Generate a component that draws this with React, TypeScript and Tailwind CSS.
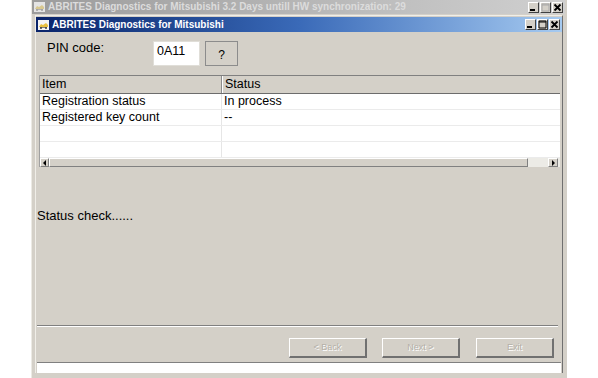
import React from "react";

const AppIcon = ({ dim }: { dim?: boolean }) => (
  <svg width="11" height="10" viewBox="0 0 11 10" className="shrink-0">
    <rect x="0" y="0" width="11" height="10" fill={dim ? "#e4e4e4" : "#f4f4f4"} />
    <path d="M1 7 L3 4 L5 5 L8 3 L10 5 L10 7 Z" fill={dim ? "#d8c890" : "#e8c040"} />
    <rect x="2" y="7" width="7" height="1" fill={dim ? "#b0b0b0" : "#808080"} />
    <circle cx="3" cy="8" r="1" fill={dim ? "#a0a0a0" : "#404040"} />
    <circle cx="8" cy="8" r="1" fill={dim ? "#a0a0a0" : "#404040"} />
  </svg>
);

const TitleBtn = ({ kind, dim }: { kind: "min" | "max" | "close"; dim?: boolean }) => (
  <div className="w-[11px] h-[11px] bg-[#d4d0c8] border-t border-l border-t-white border-l-white border-r border-b border-r-[#404040] border-b-[#404040] flex items-center justify-center">
    <svg width="9" height="9" viewBox="0 0 9 9">
      {kind === "min" && <rect x="1" y="6" width="5" height="2" fill={dim ? "#a0a0a0" : "#000"} />}
      {kind === "max" && (
        <path d="M1 1 H8 V8 H1 Z M1 2 H8" stroke={dim ? "#a8a8a8" : "#000"} strokeWidth="1" fill="none" />
      )}
      {kind === "close" && (
        <path d="M1.5 1.5 L7.5 7.5 M7.5 1.5 L1.5 7.5" stroke={dim ? "#a0a0a0" : "#000"} strokeWidth="1.8" />
      )}
    </svg>
  </div>
);

const WizBtn = ({ label }: { label: string }) => (
  <div className="w-[78px] h-[20px] bg-[#d4d0c8] border-t border-l border-t-white border-l-white border-r-2 border-b-2 border-r-[#707070] border-b-[#707070] flex items-center justify-center text-[9px] text-[#b4b0a8] [text-shadow:1px_1px_0_#ffffff]">
    {label}
  </div>
);

export default function App() {
  return (
    <div className="w-[598px] h-[378px] bg-white flex font-['Liberation_Sans',Arial,sans-serif] overflow-hidden">
      {/* outer window */}
      <div className="ml-[31px] w-[536px] h-[378px] bg-[#d4d0c8] border-l border-l-[#eceae4] flex flex-col">
        {/* outer title bar */}
        <div className="h-[14px] mr-[2px] bg-gradient-to-r from-[#9c9c9c] to-[#d0d0d0] flex items-center pl-[2px] pr-[2px] gap-[3px]">
          <AppIcon dim />
          <span className="text-[10px] font-bold text-[#dcdcdc] whitespace-nowrap leading-none">
            ABRITES Diagnostics for Mitsubishi 3.2 Days untill HW synchronization: 29
          </span>
          <div className="flex-1" />
          <div className="flex gap-[1px] mt-[1px]">
            <TitleBtn kind="min" />
            <TitleBtn kind="max" dim />
            <TitleBtn kind="close" />
          </div>
        </div>
        {/* inner window */}
        <div className="mt-[1px] ml-[3px] w-[528px] flex-1 flex flex-col border-t border-l border-t-[#f0eee8] border-l-[#f0eee8] border-r border-r-[#707070]">
          <div className="h-[15px] mt-[1px] bg-gradient-to-r from-[#0a246a] via-[#3a6ab8] to-[#a6caf0] flex items-center pl-[2px] pr-[2px] gap-[3px]">
            <AppIcon />
            <span className="text-[10px] font-bold text-white whitespace-nowrap leading-none">
              ABRITES Diagnostics for Mitsubishi
            </span>
            <div className="flex-1" />
            <div className="flex gap-[1px]">
              <TitleBtn kind="min" />
              <TitleBtn kind="max" />
              <TitleBtn kind="close" />
            </div>
          </div>
          {/* content */}
          <div className="h-[330px] flex flex-col">
            <div className="mt-[9px] h-[25px] flex items-start">
              <span className="ml-[11px] mt-[-1px] text-[13px] text-black leading-[16px] w-[106px]">PIN code:</span>
              <div className="w-[47px] h-[25px] bg-white border border-[#e0ded8] pl-[3px] pt-[1px] text-[12.5px] leading-[16px] text-black">
                0A11
              </div>
              <div className="ml-[5px] w-[33px] h-[25px] border border-[#8c8c8c] flex items-end justify-center pb-[3px] text-[12px] leading-[14px] text-black">
                ?
              </div>
            </div>
            {/* table */}
            <div className="mt-[9px] ml-[3px] mr-[2px] flex flex-col text-[12.5px] text-black border-l border-l-[#a0a0a0]">
              <div className="h-[19px] bg-[#d4d0c8] border-t border-b border-t-[#808080] border-b-[#6c6c6c] flex">
                <div className="w-[182px] pl-[2px] leading-[17px] border-r border-r-[#8c8c8c]">Item</div>
                <div className="flex-1 pl-[2px] leading-[17px] border-l border-l-white">Status</div>
              </div>
              {[
                ["Registration status", "In process"],
                ["Registered key count", "--"],
                ["", ""],
                ["", ""],
              ].map((r, i) => (
                <div key={i} className="h-[16px] bg-white flex border-b border-b-[#ebebeb]">
                  <div className="w-[182px] pl-[2px] leading-[15px] border-r border-r-[#e6e6e6] whitespace-nowrap">{r[0]}</div>
                  <div className="flex-1 pl-[2px] leading-[15px] whitespace-nowrap">{r[1]}</div>
                </div>
              ))}
              {/* scrollbar */}
              <div className="h-[9px] flex bg-[#ecebe6]">
                <div className="w-[9px] h-[9px] bg-[#d4d0c8] border-t border-l border-white border-r border-b border-r-[#808080] border-b-[#808080] flex items-center justify-center">
                  <div className="w-0 h-0 border-y-[3px] border-y-transparent border-r-[3px] border-r-black" />
                </div>
                <div className="w-[479px] h-[9px] bg-[#d4d0c8] border-t border-l border-white border-r border-b border-r-[#808080] border-b-[#808080]" />
                <div className="flex-1" />
                <div className="w-[10px] h-[9px] mr-[2px] bg-[#d4d0c8] border-t border-l border-white border-r border-b border-r-[#808080] border-b-[#808080] flex items-center justify-center">
                  <div className="w-0 h-0 border-y-[3px] border-y-transparent border-l-[3px] border-l-black" />
                </div>
              </div>
            </div>
            <div className="mt-[41px] ml-[1px] text-[13px] leading-[16px] text-black">Status check......</div>
            <div className="flex-1" />
            <div className="ml-[1px] mr-[4px] h-[2px] border-t border-t-[#808080] border-b border-b-white" />
            <div className="mt-[11px] mb-[4px] h-[20px] flex">
              <div className="ml-[253px]">
                <WizBtn label="< Back" />
              </div>
              <div className="ml-[15px]">
                <WizBtn label="Next >" />
              </div>
              <div className="ml-[16px]">
                <WizBtn label="Exit" />
              </div>
            </div>
          </div>
          {/* status bar */}
          <div className="h-[11px] border-t border-t-[#808080] ml-[1px] mr-[1px] bg-white" />
        </div>
        <div className="h-[5px]" />
      </div>
    </div>
  );
}
